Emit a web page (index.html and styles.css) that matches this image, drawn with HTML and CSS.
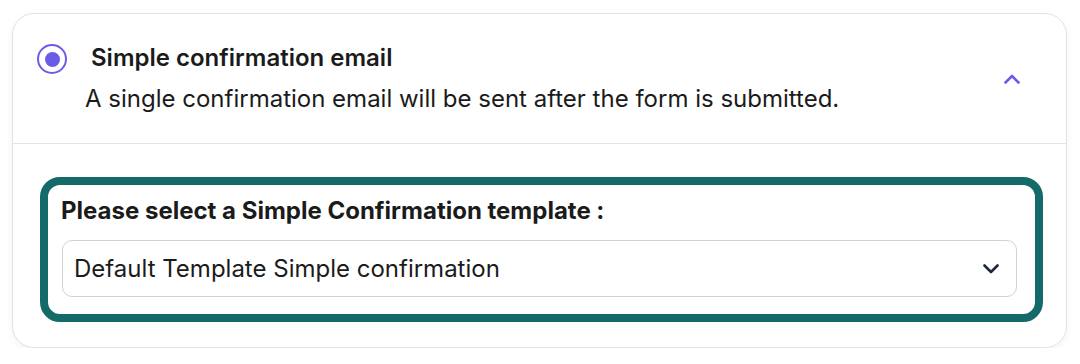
FILE: index.html
```html
<!DOCTYPE html>
<html lang="en">
<head>
<meta charset="utf-8">
<title>Confirmation email</title>
<link rel="stylesheet" href="styles.css">
</head>
<body>
<div class="card">
  <div class="card-header">
    <span class="radio"><span class="radio-dot"></span></span>
    <div class="header-text">
      <div class="title">Simple confirmation email</div>
      <div class="desc">A single confirmation email will be sent after the form is submitted.</div>
    </div>
    <svg class="chev-up" width="16" height="10" viewBox="0 0 16 10"><path d="M1.5 8.5 L8 2 L14.5 8.5" fill="none" stroke="#6b5ce7" stroke-width="2.6" stroke-linecap="round" stroke-linejoin="round"/></svg>
  </div>
  <div class="card-body">
    <div class="template-box">
      <div class="label">Please select a Simple Confirmation template :</div>
      <div class="select">
        <span class="select-text">Default Template Simple confirmation</span>
        <svg class="chev-down" width="16" height="10" viewBox="0 0 16 10"><path d="M1.5 1.5 L8 8 L14.5 1.5" fill="none" stroke="#1f2937" stroke-width="2.6" stroke-linecap="round" stroke-linejoin="round"/></svg>
      </div>
    </div>
  </div>
</div>
</body>
</html>
```
FILE: styles.css
```css
html, body {
  margin: 0;
  padding: 0;
  background: #ffffff;
}
body {
  font-family: Inter, "Noto Sans", "Liberation Sans", sans-serif;
  color: #1b1b1b;
}
.card {
  box-sizing: border-box;
  margin: 13px 0 0 12px;
  width: 1055px;
  height: 335px;
  border: 1.5px solid #e3e3e3;
  border-radius: 22px;
  background: #fff;
  box-shadow: 0 3px 8px rgba(0, 0, 0, 0.05);
  display: flex;
  flex-direction: column;
}
.card-header {
  box-sizing: border-box;
  height: 130px;
  border-bottom: 1.5px solid #e4e4e4;
  display: flex;
  align-items: flex-start;
  padding: 30px 0 0 24px;
}
.radio {
  box-sizing: border-box;
  flex: none;
  width: 30px;
  height: 30px;
  border: 2.5px solid #6b5ce7;
  border-radius: 50%;
  display: flex;
  align-items: center;
  justify-content: center;
}
.radio-dot {
  width: 15px;
  height: 15px;
  border-radius: 50%;
  background: #6b5ce7;
}
.header-text {
  flex: 1;
  padding-left: 18px;
}
.title {
  font-size: 24px;
  font-weight: 600;
  line-height: 28px;
  padding-left: 6px;
  color: #1b1b1b;
}
.desc {
  font-size: 24px;
  font-weight: 400;
  line-height: 30px;
  margin-top: 12px;
  color: #1b1b1b;
}
.chev-up {
  flex: none;
  margin: 30px 46px 0 0;
}
.card-body {
  flex: 1;
  padding: 33px 23px 24px 27px;
}
.template-box {
  box-sizing: border-box;
  border: 8px solid #136a68;
  border-radius: 20px;
  padding: 12px 18px 17px 13px;
}
.label {
  font-size: 24px;
  font-weight: 700;
  line-height: 28px;
  color: #1b1b1b;
}
.select {
  box-sizing: border-box;
  margin-top: 15px;
  margin-left: 1px;
  height: 57px;
  border: 1.5px solid #d2d2d2;
  border-radius: 10px;
  display: flex;
  align-items: center;
  justify-content: space-between;
  padding: 0 17px 0 11px;
}
.select-text {
  font-size: 24px;
  color: #1b1b1b;
}
.chev-down {
  flex: none;
}
```
